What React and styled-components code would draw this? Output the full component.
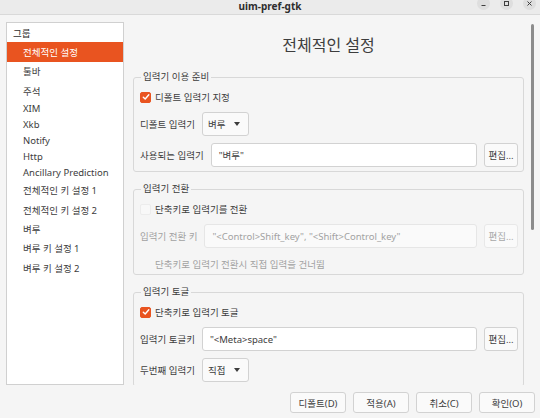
import React from 'react';
import styled, { createGlobalStyle } from 'styled-components';

const GlobalStyle = createGlobalStyle`
  html, body {
    margin: 0;
    padding: 0;
    background: #f5f5f5;
  }
  body {
    font-family: "Noto Sans", "Noto Sans CJK KR", sans-serif;
    font-size: 9.5px;
    color: #3d3d3d;
  }
`;

const Window = styled.div`
  width: 540px;
  height: 418px;
  display: flex;
  flex-direction: column;
  overflow: hidden;
  background: #f5f5f5;
`;

const TitleBar = styled.div`
  flex: none;
  height: 14px;
  background: #ebebeb;
  border-bottom: 1px solid #d9d9d9;
  display: grid;
  grid-template-columns: 1fr auto 1fr;
  align-items: start;
  overflow: hidden;
`;

const Title = styled.div`
  grid-column: 2;
  font-size: 10px;
  line-height: 13px;
  font-weight: bold;
  color: #2e2e2e;
`;

const Controls = styled.div`
  grid-column: 3;
  justify-self: end;
  display: flex;
  gap: 10px;
  margin-top: -3px;
  padding-right: 4px;
`;

const ControlButton = styled.div`
  width: 13px;
  height: 13px;
  border-radius: 50%;
  background: #dedede;
  display: grid;
  place-items: center;
  color: #3d3d3d;
`;

const Main = styled.div`
  flex: none;
  height: 363px;
  margin-top: 7px;
  display: flex;
`;

const Sidebar = styled.div`
  flex: none;
  width: 118px;
  margin-left: 6px;
  box-sizing: border-box;
  border: 1px solid #d0d0d0;
  background: #fff;
`;

const SideRow = styled.div`
  height: ${(p) => (p.$latin ? '16px' : '19.4px')};
  display: flex;
  align-items: center;
  padding-left: ${(p) => (p.$header ? '6px' : '16px')};
  white-space: nowrap;
  background: ${(p) => (p.$selected ? '#e95420' : 'transparent')};
  color: ${(p) => (p.$selected ? '#fff' : p.$header ? '#2e2e2e' : '#3d3d3d')};
`;

const Content = styled.div`
  flex: 1;
  position: relative;
  overflow: hidden;
  padding: 0 16px 0 9px;
`;

const PageTitle = styled.div`
  font-size: 16px;
  line-height: 22px;
  text-align: center;
  margin: 12px 0 14px;
  color: #3d3d3d;
`;

const Frames = styled.div`
  display: flex;
  flex-direction: column;
  gap: 10px;
`;

const Frame = styled.fieldset`
  margin: 0;
  min-width: 0;
  border: 1px solid #d8d8d8;
  border-radius: 3px;
  padding: 5px 5px ${(p) => p.$bottom || '4px'} 6px;
  display: flex;
  flex-direction: column;
  gap: 7px;
`;

const Legend = styled.legend`
  padding: 0 2px;
  margin-left: 1px;
  line-height: 14px;
  color: #3d3d3d;
`;

const CheckRow = styled.div`
  height: 16px;
  display: flex;
  align-items: center;
  gap: 4px;
`;

const CheckBox = styled.span`
  width: 11px;
  height: 11px;
  box-sizing: border-box;
  border-radius: 2px;
  display: grid;
  place-items: center;
  background: ${(p) => (p.$checked ? '#e95420' : '#f8f8f8')};
  border: 1px solid ${(p) => (p.$checked ? '#e95420' : '#ececec')};
`;

const Row = styled.div`
  display: flex;
  align-items: center;
  gap: 7px;
`;

const Label = styled.span`
  white-space: nowrap;
  color: ${(p) => (p.$disabled ? '#a2a2a2' : '#3d3d3d')};
`;

const Entry = styled.div`
  flex: 1;
  height: 24px;
  box-sizing: border-box;
  border: 1px solid ${(p) => (p.$disabled ? '#e6e6e6' : '#d2d2d2')};
  border-radius: 3px;
  background: ${(p) => (p.$disabled ? '#fafafa' : '#fff')};
  color: ${(p) => (p.$disabled ? '#a2a2a2' : '#3d3d3d')};
  padding: 0 7px;
  display: flex;
  align-items: center;
  white-space: nowrap;
  overflow: hidden;
`;

const EditButton = styled.div`
  flex: none;
  width: 34px;
  height: 24px;
  box-sizing: border-box;
  border: 1px solid ${(p) => (p.$disabled ? '#e8e8e8' : '#d2d2d2')};
  border-radius: 3px;
  background: #fafafa;
  color: ${(p) => (p.$disabled ? '#a8a8a8' : '#3d3d3d')};
  display: grid;
  place-items: center;
`;

const Combo = styled.div`
  flex: none;
  width: 47px;
  height: 24px;
  box-sizing: border-box;
  border: 1px solid #d2d2d2;
  border-radius: 3px;
  background: #fafafa;
  padding: 0 8px 0 5px;
  display: flex;
  align-items: center;
  justify-content: space-between;
`;

const Arrow = styled.span`
  width: 0;
  height: 0;
  border-left: 3.5px solid transparent;
  border-right: 3.5px solid transparent;
  border-top: 4px solid #3d3d3d;
`;

const Note = styled.div`
  height: 18px;
  display: flex;
  align-items: center;
  padding-left: 15px;
  color: #a2a2a2;
`;

const ScrollThumb = styled.div`
  position: absolute;
  top: 2px;
  right: 6px;
  width: 3px;
  height: 206px;
  border-radius: 2px;
  background: #8c8c8c;
`;

const ButtonBar = styled.div`
  flex: 1;
  display: flex;
  justify-content: flex-end;
  align-items: flex-start;
  gap: 7px;
  padding: 7px 5px 0 0;
`;

const DialogButton = styled.div`
  width: 56px;
  height: 21px;
  box-sizing: border-box;
  border: 1px solid #d2d2d2;
  border-radius: 3px;
  background: #fafafa;
  display: grid;
  place-items: center;
  color: #3d3d3d;
`;

const groups = [
  { name: '전체적인 설정', selected: true },
  { name: '툴바' },
  { name: '주석' },
  { name: 'XIM', latin: true },
  { name: 'Xkb', latin: true },
  { name: 'Notify', latin: true },
  { name: 'Http', latin: true },
  { name: 'Ancillary Prediction', latin: true },
  { name: '전체적인 키 설정 1' },
  { name: '전체적인 키 설정 2' },
  { name: '벼루' },
  { name: '벼루 키 설정 1' },
  { name: '벼루 키 설정 2' },
];

const Check = ({ checked }) => (
  <CheckBox $checked={checked}>
    {checked && (
      <svg width="8" height="8" viewBox="0 0 8 8">
        <path d="M1.3 4.2 L3.2 6 L6.8 1.8" fill="none" stroke="#fff" strokeWidth="1.4" strokeLinecap="round" strokeLinejoin="round" />
      </svg>
    )}
  </CheckBox>
);

const App = () => {
  return (
    <Window>
      <GlobalStyle />
      <TitleBar>
        <Title>uim-pref-gtk</Title>
        <Controls>
          <ControlButton>
            <svg width="13" height="13" viewBox="0 0 13 13">
              <path d="M4.5 8.5 H8.5" stroke="currentColor" strokeWidth="1" />
            </svg>
          </ControlButton>
          <ControlButton>
            <svg width="13" height="13" viewBox="0 0 13 13">
              <rect x="4.5" y="4.5" width="4" height="4" fill="none" stroke="currentColor" strokeWidth="1" />
            </svg>
          </ControlButton>
          <ControlButton>
            <svg width="13" height="13" viewBox="0 0 13 13">
              <path d="M4.5 4.5 L8.5 8.5 M8.5 4.5 L4.5 8.5" stroke="currentColor" strokeWidth="1" />
            </svg>
          </ControlButton>
        </Controls>
      </TitleBar>

      <Main>
        <Sidebar>
          <SideRow $header>그룹</SideRow>
          {groups.map((g) => (
            <SideRow key={g.name} $latin={g.latin} $selected={g.selected}>
              {g.name}
            </SideRow>
          ))}
        </Sidebar>

        <Content>
          <PageTitle>전체적인 설정</PageTitle>
          <Frames>
            <Frame>
              <Legend>입력기 이용 준비</Legend>
              <CheckRow>
                <Check checked />
                <span>디폴트 입력기 지정</span>
              </CheckRow>
              <Row>
                <Label>디폴트 입력기</Label>
                <Combo>
                  <span>벼루</span>
                  <Arrow />
                </Combo>
              </Row>
              <Row>
                <Label>사용되는 입력기</Label>
                <Entry>"벼루"</Entry>
                <EditButton>편집...</EditButton>
              </Row>
            </Frame>

            <Frame $bottom="1px">
              <Legend>입력기 전환</Legend>
              <CheckRow>
                <Check />
                <span>단축키로 입력기를 전환</span>
              </CheckRow>
              <Row>
                <Label $disabled>입력기 전환 키</Label>
                <Entry $disabled>"&lt;Control&gt;Shift_key", "&lt;Shift&gt;Control_key"</Entry>
                <EditButton $disabled>편집...</EditButton>
              </Row>
              <Note>단축키로 입력기 전환시 직접 입력을 건너뜀</Note>
            </Frame>

            <Frame>
              <Legend>입력기 토글</Legend>
              <CheckRow>
                <Check checked />
                <span>단축키로 입력기 토글</span>
              </CheckRow>
              <Row>
                <Label>입력기 토글키</Label>
                <Entry>"&lt;Meta&gt;space"</Entry>
                <EditButton>편집...</EditButton>
              </Row>
              <Row>
                <Label>두번째 입력기</Label>
                <Combo>
                  <span>직접</span>
                  <Arrow />
                </Combo>
              </Row>
            </Frame>
          </Frames>
          <ScrollThumb />
        </Content>
      </Main>

      <ButtonBar>
        <DialogButton>디폴트(D)</DialogButton>
        <DialogButton>적용(A)</DialogButton>
        <DialogButton>취소(C)</DialogButton>
        <DialogButton>확인(O)</DialogButton>
      </ButtonBar>
    </Window>
  );
};

export default App;
